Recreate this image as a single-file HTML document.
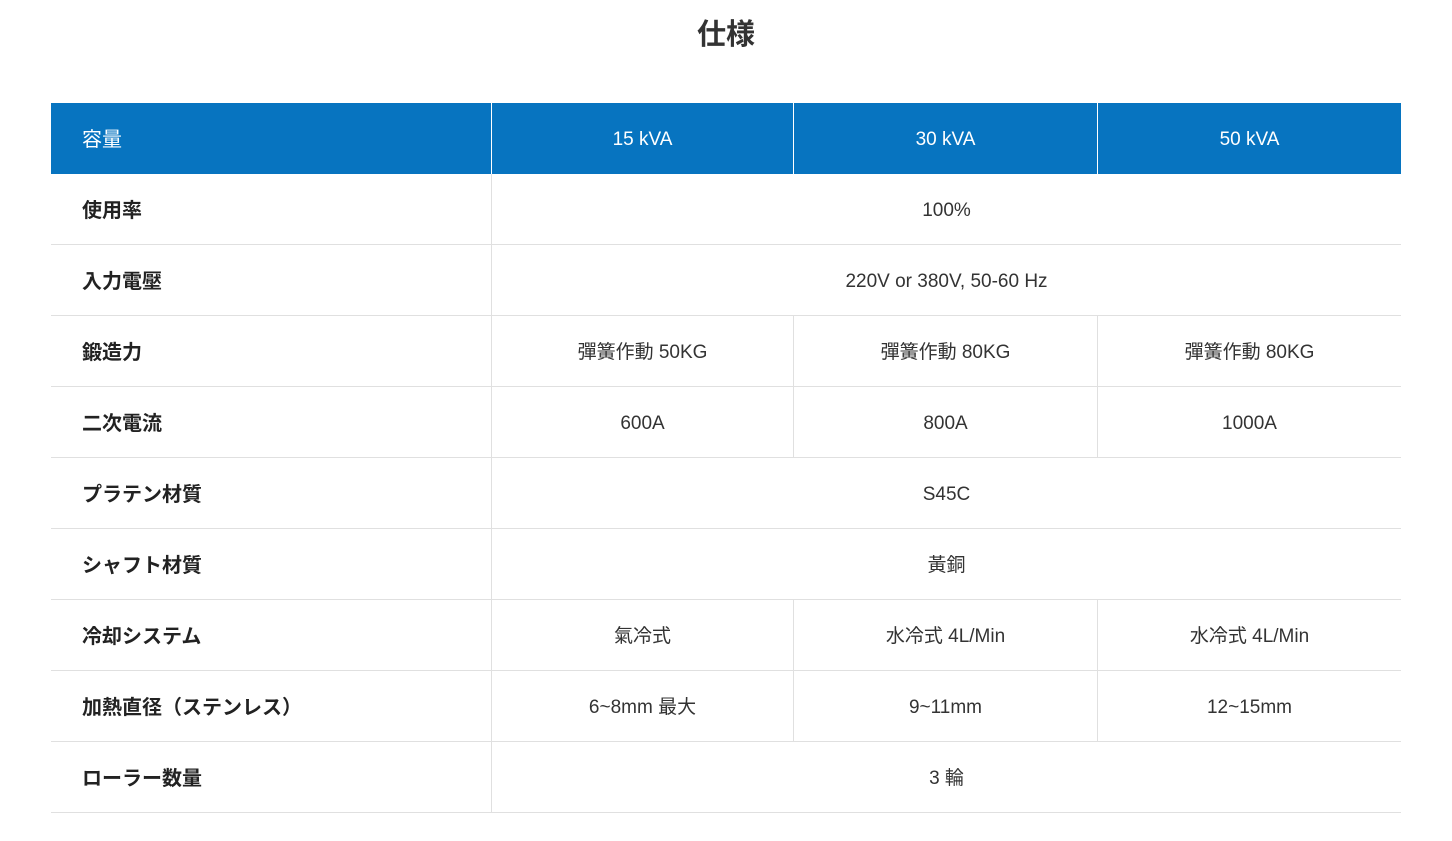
<!DOCTYPE html>
<html><head><meta charset="utf-8"><style>
body{margin:0;background:#fff;font-family:"Liberation Sans","Noto Sans CJK JP",sans-serif;color:#333;}
h1{position:absolute;top:15px;left:0;width:1452px;text-align:center;margin:0;font-size:29px;font-weight:bold;line-height:40px;color:#333;}
.t{position:absolute;left:51px;top:103px;width:1350px;font-size:19px;}
.r{display:flex;height:71px;box-sizing:border-box;border-bottom:1px solid #e0e0e0;}
.h{height:71px;background:#0774c0;color:#fff;border-bottom:none;}
.r div{display:flex;align-items:center;justify-content:center;box-sizing:border-box;border-left:1px solid #e0e0e0;padding-top:3px;line-height:24px;}
.h div{border-left:1px solid #fff;padding-top:2px;}
.r div.l{width:440px;border-left:none;justify-content:flex-start;padding-left:31px;font-size:20px;}
.r:not(.h) div.l{font-weight:bold;color:#222;}
.a{width:302px}.b{width:304px}.c{width:304px}.s{width:910px}
</style></head><body>
<h1>仕様</h1>
<div class="t">
<div class="r h"><div class="l">容量</div><div class="a">15 kVA</div><div class="b">30 kVA</div><div class="c">50 kVA</div></div>
<div class="r"><div class="l">使用率</div><div class="s">100%</div></div>
<div class="r"><div class="l">入力電壓</div><div class="s">220V or 380V, 50-60 Hz</div></div>
<div class="r"><div class="l">鍛造力</div><div class="a">彈簧作動 50KG</div><div class="b">彈簧作動 80KG</div><div class="c">彈簧作動 80KG</div></div>
<div class="r"><div class="l">二次電流</div><div class="a">600A</div><div class="b">800A</div><div class="c">1000A</div></div>
<div class="r"><div class="l">プラテン材質</div><div class="s">S45C</div></div>
<div class="r"><div class="l">シャフト材質</div><div class="s">黃銅</div></div>
<div class="r"><div class="l">冷却システム</div><div class="a">氣冷式</div><div class="b">水冷式 4L/Min</div><div class="c">水冷式 4L/Min</div></div>
<div class="r"><div class="l">加熱直径（ステンレス）</div><div class="a">6~8mm 最大</div><div class="b">9~11mm</div><div class="c">12~15mm</div></div>
<div class="r"><div class="l">ローラー数量</div><div class="s">3 輪</div></div>
</div>
</body></html>
